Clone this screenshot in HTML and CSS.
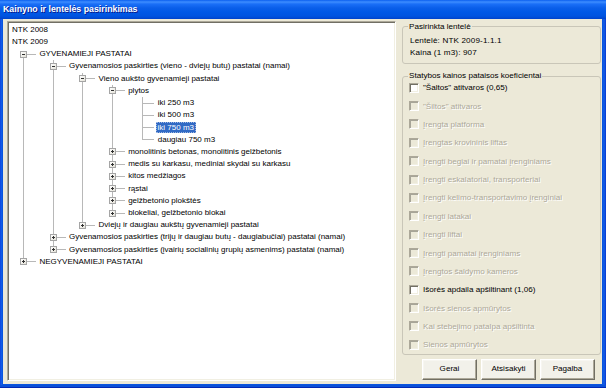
FILE: index.html
```html
<!DOCTYPE html>
<html lang="lt">
<head>
<meta charset="utf-8">
<title>Kainyno ir lentelės pasirinkimas</title>
<link rel="stylesheet" href="styles.css">
</head>
<body>
<div class="window">
  <div class="titlebar">Kainyno ir lentelės pasirinkimas</div>
  <div class="frame">
    <div class="client">
      <div class="tree">
        <div class="row"><span class="lbl root">NTK 2008</span></div>
        <div class="row"><span class="lbl root">NTK 2009</span></div>
        <div class="row"><span class="c n f"><span class="box minus"></span></span><span class="lbl">GYVENAMIEJI PASTATAI</span></div>
        <div class="row"><span class="c p"></span><span class="c n t"><span class="box minus"></span></span><span class="lbl">Gyvenamosios paskirties (vieno - dviejų butų) pastatai (namai)</span></div>
        <div class="row"><span class="c p"></span><span class="c p"></span><span class="c n t"><span class="box minus"></span></span><span class="lbl">Vieno aukšto gyvenamieji pastatai</span></div>
        <div class="row"><span class="c p"></span><span class="c p"></span><span class="c p"></span><span class="c n t"><span class="box minus"></span></span><span class="lbl">plytos</span></div>
        <div class="row"><span class="c p"></span><span class="c p"></span><span class="c p"></span><span class="c p"></span><span class="c n t"></span><span class="lbl">iki 250 m3</span></div>
        <div class="row"><span class="c p"></span><span class="c p"></span><span class="c p"></span><span class="c p"></span><span class="c n t"></span><span class="lbl">iki 500 m3</span></div>
        <div class="row"><span class="c p"></span><span class="c p"></span><span class="c p"></span><span class="c p"></span><span class="c n t"></span><span class="lbl sel">iki 750 m3</span></div>
        <div class="row"><span class="c p"></span><span class="c p"></span><span class="c p"></span><span class="c p"></span><span class="c n e"></span><span class="lbl">daugiau 750 m3</span></div>
        <div class="row"><span class="c p"></span><span class="c p"></span><span class="c p"></span><span class="c n t"><span class="box plus"></span></span><span class="lbl">monolitinis betonas, monolitinis gelžbetonis</span></div>
        <div class="row"><span class="c p"></span><span class="c p"></span><span class="c p"></span><span class="c n t"><span class="box plus"></span></span><span class="lbl">medis su karkasu, mediniai skydai su karkasu</span></div>
        <div class="row"><span class="c p"></span><span class="c p"></span><span class="c p"></span><span class="c n t"><span class="box plus"></span></span><span class="lbl">kitos medžiagos</span></div>
        <div class="row"><span class="c p"></span><span class="c p"></span><span class="c p"></span><span class="c n t"><span class="box plus"></span></span><span class="lbl">rąstai</span></div>
        <div class="row"><span class="c p"></span><span class="c p"></span><span class="c p"></span><span class="c n t"><span class="box plus"></span></span><span class="lbl">gelžbetonio plokštės</span></div>
        <div class="row"><span class="c p"></span><span class="c p"></span><span class="c p"></span><span class="c n e"><span class="box plus"></span></span><span class="lbl">blokeliai, gelžbetonio blokai</span></div>
        <div class="row"><span class="c p"></span><span class="c p"></span><span class="c n e"><span class="box plus"></span></span><span class="lbl">Dviejų ir daugiau aukštų gyvenamieji pastatai</span></div>
        <div class="row"><span class="c p"></span><span class="c n t"><span class="box plus"></span></span><span class="lbl">Gyvenamosios paskirties (trijų ir daugiau butų - daugiabučiai) pastatai (namai)</span></div>
        <div class="row"><span class="c p"></span><span class="c n e"><span class="box plus"></span></span><span class="lbl">Gyvenamosios paskirties (įvairių socialinių grupių asmenims) pastatai (namai)</span></div>
        <div class="row"><span class="c n e"><span class="box plus"></span></span><span class="lbl">NEGYVENAMIEJI PASTATAI</span></div>
      </div>
      <div class="side">
        <div class="group g1">
          <div class="legend">Pasirinkta lentelė</div>
          <div class="info first">Lentelė: NTK 2009-1.1.1</div>
          <div class="info">Kaina (1 m3): 907</div>
        </div>
        <div class="group g2">
          <div class="legend">Statybos kainos pataisos koeficientai</div>
          <div class="chk"><span class="cb"></span><span>"Šaltos" atitvaros (0,65)</span></div>
          <div class="chk dis"><span class="cb"></span><span>"Šiltos" atitvaros</span></div>
          <div class="chk dis"><span class="cb"></span><span>Įrengta platforma</span></div>
          <div class="chk dis"><span class="cb"></span><span>Įrengtas krovininis liftas</span></div>
          <div class="chk dis"><span class="cb"></span><span>Įrengti begiai ir pamatai įrenginiams</span></div>
          <div class="chk dis"><span class="cb"></span><span>Įrengti eskalatoriai, transporteriai</span></div>
          <div class="chk dis"><span class="cb"></span><span>Įrengti kelimo-transportavimo įrenginiai</span></div>
          <div class="chk dis"><span class="cb"></span><span>Įrengti latakai</span></div>
          <div class="chk dis"><span class="cb"></span><span>Įrengti liftai</span></div>
          <div class="chk dis"><span class="cb"></span><span>Įrengti pamatai įrenginiams</span></div>
          <div class="chk dis"><span class="cb"></span><span>Įrengtos šaldymo kameros</span></div>
          <div class="chk"><span class="cb"></span><span>Išorės apdaila apšiltinant (1,06)</span></div>
          <div class="chk dis"><span class="cb"></span><span>Išorės sienos apmūrytos</span></div>
          <div class="chk dis"><span class="cb"></span><span>Kai stebejimo patalpa apšiltinta</span></div>
          <div class="chk dis"><span class="cb"></span><span>Sienos apmūrytos</span></div>
        </div>
        <div class="buttons">
          <button class="btn">Gerai</button>
          <button class="btn">Atsisakyti</button>
          <button class="btn">Pagalba</button>
        </div>
      </div>
    </div>
  </div>
</div>
</body>
</html>
```
FILE: styles.css
```css
* { box-sizing: border-box; }
html, body { margin: 0; padding: 0; }
body {
  width: 606px;
  height: 388px;
  overflow: hidden;
  font-family: "Liberation Sans", Arial, sans-serif;
  font-size: 8px;
  color: #000;
  background: #ece9d8;
}
.window {
  width: 606px;
  height: 388px;
  display: flex;
  flex-direction: column;
}
.titlebar {
  height: 19px;
  flex: none;
  display: flex;
  align-items: center;
  padding-left: 3px;
  padding-bottom: 1px;
  color: #fff;
  font-weight: bold;
  font-size: 8.8px;
  text-shadow: 1px 1px 0 #0a1c8c;
  background: linear-gradient(to bottom, #0b5fef 0, #3d8dff 2px, #1a6ff7 4px, #0a5ee9 8px, #0058e6 12px, #0054e0 16px, #0049d4 18px, #0042c8 19px);
}
.frame {
  flex: 1;
  display: flex;
  padding: 0 4px 4px 3px;
  background: linear-gradient(to right, #0832d6 0, #1b68ee 1px, #0a55df 2px, #0a55df calc(100% - 3px), #1560e8 calc(100% - 2px), #0836cf 100%);
  box-shadow: inset 0 -1px 0 #0028b4, inset 0 -3px 0 #0a50d8;
}
.client {
  flex: 1;
  display: flex;
  gap: 6px;
  padding: 2px 1px 3px 4px;
  background: #ece9d8;
}

/* tree */
.tree {
  width: 389px;
  flex: none;
  background: #fff;
  border: 1px solid;
  border-color: #aca899 #fff #fff #aca899;
  box-shadow: inset 1px 1px 0 #716f64, inset -1px -1px 0 #f1efe2;
  padding: 1.7px 0 0 1px;
  overflow: hidden;
}
.row {
  display: flex;
  height: 12.22px;
  align-items: stretch;
  white-space: nowrap;
}
.c {
  flex: none;
  width: 29.6px;
  --l: #b8b8b8;
}
.p {
  background: linear-gradient(var(--l), var(--l)) 14.3px 0 / 1px 100% no-repeat;
}
.n {
  display: flex;
  align-items: center;
  justify-content: center;
}
.n.t {
  background:
    linear-gradient(var(--l), var(--l)) 14.3px 0 / 1px 100% no-repeat,
    linear-gradient(var(--l), var(--l)) 15px 50% / 12px 1px no-repeat;
}
.n.e {
  background:
    linear-gradient(var(--l), var(--l)) 14.3px 0 / 1px 50% no-repeat,
    linear-gradient(var(--l), var(--l)) 15px 50% / 12px 1px no-repeat;
}
.n.f {
  background:
    linear-gradient(var(--l), var(--l)) 14.3px 100% / 1px 50% no-repeat,
    linear-gradient(var(--l), var(--l)) 15px 50% / 12px 1px no-repeat;
}
.box {
  width: 7px;
  height: 7px;
  border: 1px solid #a5a5a5;
  background:
    linear-gradient(#303030, #303030) center / 3px 1px no-repeat,
    linear-gradient(135deg, #fff, #e4e2d8);
}
.box.plus {
  background:
    linear-gradient(#303030, #303030) center / 3px 1px no-repeat,
    linear-gradient(#303030, #303030) center / 1px 3px no-repeat,
    linear-gradient(135deg, #fff, #e4e2d8);
}
.lbl {
  padding-left: 0.8px;
  line-height: 12.22px;
}
.lbl.root { padding-left: 3px; }
.lbl.sel {
  align-self: center;
  background: #316ac5;
  color: #fff;
  height: 11px;
  line-height: 11px;
  padding: 0 2px;
  margin-left: -1.4px;
  outline: 1px dotted #9fb7e0;
  outline-offset: -1px;
}

/* side panel */
.side {
  flex: 1;
  display: flex;
  flex-direction: column;
  font-size: 8.1px;
}
.group {
  display: flex;
  flex-direction: column;
  border: 1px solid #c9c6b8;
  border-radius: 3px;
  padding: 0 4px 0 6px;
}
.legend {
  align-self: flex-start;
  background: #ece9d8;
  height: 12px;
  line-height: 12px;
  margin: -6.5px 0 0 -1px;
  padding: 0 1px;
  color: #000;
}
.g1 {
  margin-top: 5px;
  padding-bottom: 3px;
}
.info {
  height: 12.5px;
  line-height: 12.5px;
  padding-left: 1px;
  letter-spacing: 0.15px;
}
.info.first { margin-top: 2.2px; }
.g2 {
  margin-top: 12px;
  padding-bottom: 0;
}
.g2 .legend { margin-bottom: -3.6px; }
.chk {
  display: flex;
  align-items: center;
  gap: 4px;
  height: 18.36px;
  white-space: nowrap;
}
.cb {
  flex: none;
  width: 10px;
  height: 10px;
  border: 1px solid;
  border-color: #aca899 #fff #fff #aca899;
  box-shadow: inset 1px 1px 0 #716f64, inset -1px -1px 0 #f1efe2;
  background: #fff;
}
.chk.dis { color: #aca899; text-shadow: 1px 1px 0 #fff; }
.chk.dis .cb {
  background: #ece9d8;
  box-shadow: inset 1px 1px 0 #a7a598, inset -1px -1px 0 #f1efe2;
}
.buttons {
  display: flex;
  justify-content: flex-end;
  gap: 4px;
  margin-top: 4px;
  padding-right: 6px;
}
.btn {
  width: 55px;
  height: 21px;
  font: inherit;
  color: #000;
  padding: 0 0 1px;
  background: #f2f1ea;
  border: 1px solid;
  border-color: #fff #716f64 #716f64 #fff;
  box-shadow: inset -1px -1px 0 #aca899, inset 1px 1px 0 #f7f6f1;
}
```
